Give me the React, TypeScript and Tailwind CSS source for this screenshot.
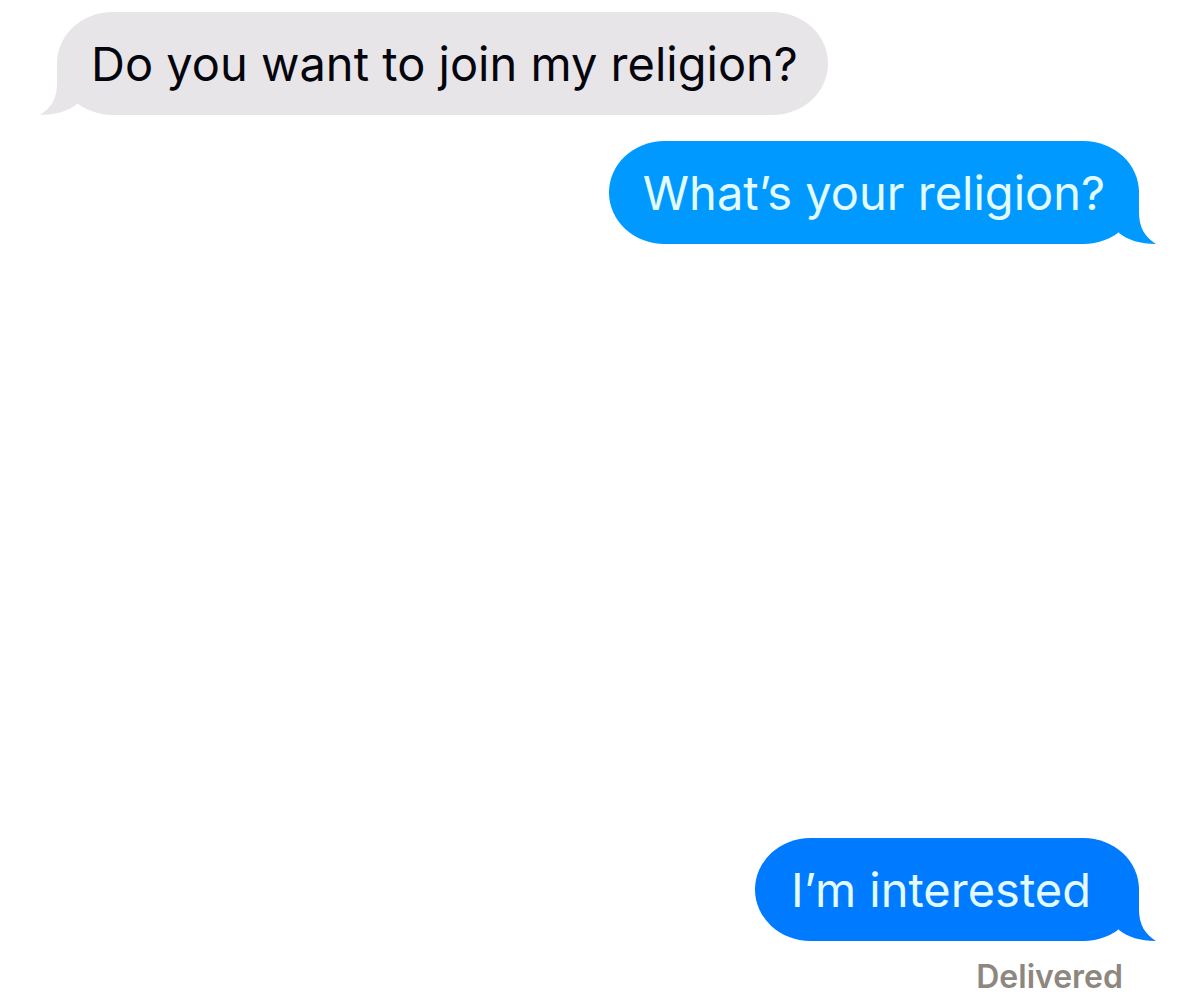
import React from 'react';
import clsx from 'clsx';

type Tone = 'received' | 'sent' | 'latest';

interface Message {
    id: number;
    text: string;
    tone: Tone;
    status?: string;
}

const earlier: Message[] = [
    { id: 1, text: 'Do you want to join my religion?', tone: 'received' },
    { id: 2, text: 'What’s your religion?', tone: 'sent' },
];

const latest: Message = { id: 3, text: 'I’m interested', tone: 'latest', status: 'Delivered' };

const tones: Record<Tone, string> = {
    received: 'bg-[#e8e5e9] pr-[30px] pl-[34px] text-[#05060d]',
    sent: 'bg-[#0099ff] px-[34px] text-[#e2fbff]',
    latest: 'bg-[#007aff] pr-12 pl-9 text-[#e2fbff]',
};

const tailTones: Record<Tone, string> = {
    received: 'left-0 -translate-x-4 -scale-x-100 text-[#e8e5e9]',
    sent: 'right-0 translate-x-4 text-[#0099ff]',
    latest: 'right-0 translate-x-4 text-[#007aff]',
};

// Drawn for the right-hand side, mirrored for received messages
function Tail({ tone }: { tone: Tone }) {
    return (
        <svg
            viewBox="0 0 38 54"
            aria-hidden="true"
            className={clsx('absolute bottom-0 h-[54px] w-[38px] overflow-visible', tailTones[tone])}
        >
            <path d="M1 0H22V22C22 38 28 47 39 54C23 54 11 50 2 43Z" fill="currentColor" />
        </svg>
    );
}

function Bubble({ message }: { message: Message }) {
    const received = message.tone === 'received';

    return (
        <li className={clsx('flex flex-col', received ? 'items-start' : 'items-end')}>
            <div className={clsx('relative rounded-[56px/52px] py-5', tones[message.tone])}>
                <Tail tone={message.tone} />
                <p className="relative text-[47px] leading-[63px]">{message.text}</p>
            </div>
            {message.status && (
                <p className="mt-4 mr-4 text-[32px] leading-10 font-semibold text-[#8d8780]">{message.status}</p>
            )}
        </li>
    );
}

export default function App() {
    return (
        <main className="flex min-h-screen flex-col justify-between bg-white pt-3 pr-[53px] pb-[9px] pl-[57px] font-['Inter','Liberation_Sans',sans-serif]">
            <ol className="flex flex-col gap-[26px]">
                {earlier.map(message => (
                    <Bubble key={message.id} message={message} />
                ))}
            </ol>
            <ol>
                <Bubble message={latest} />
            </ol>
        </main>
    );
}
